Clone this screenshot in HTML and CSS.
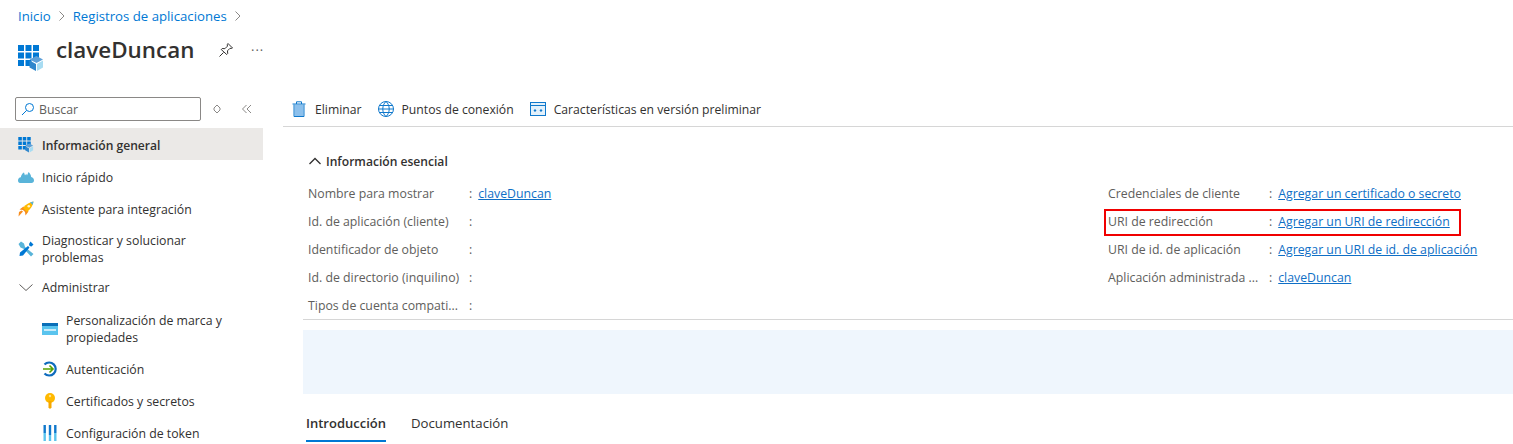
FILE: index.html
```html
<!DOCTYPE html>
<html lang="es">

<head>
  <meta charset="UTF-8">
  <meta name="viewport" content="width=device-width, initial-scale=1.0">
  <title>claveDuncan</title>
  <link rel="stylesheet" href="styles.css">
</head>

<body>
  <nav class="breadcrumb">
    <a href="#">Inicio</a>
    <svg class="crumb-sep" width="8" height="12" viewBox="0 0 8 12"><path d="M1.500 1.500 6 6l-4.500 4.500" /></svg>
    <a href="#">Registros de aplicaciones</a>
    <svg class="crumb-sep" width="8" height="12" viewBox="0 0 8 12"><path d="M1.500 1.500 6 6l-4.500 4.500" /></svg>
  </nav>

  <header class="title-row">
    <svg class="app-icon" width="26" height="27" viewBox="0 0 26 27">
      <path fill="#0078d4" d="M0 0h6v6H0zM7.500 0h6v6h-6zM15 0h6v6h-6zM0 7.500h6v6H0zM7.500 7.500h6v6h-6zM15 7.500h6v6h-6zM0 15h6v6H0zM7.500 15h6v6h-6z" />
      <path fill="#5ea0d8" d="M18.500 11 25 14.500 18.500 18 11.500 14.500z" />
      <path fill="#2f86cc" d="M11.500 15.500 18 19v7l-6.500-3.500z" />
      <path fill="#a8dcf2" d="M25 15.500V22.500L19 26v-7z" />
    </svg>
    <h1>claveDuncan</h1>
    <svg class="pin" width="16" height="16" viewBox="0 0 16 16">
      <path d="M10 1.500 14.500 6l-1 .5-1.500-.2-2.500 2.500.2 2.700-1 1L3.200 7.500l1-1 2.700.2L9.400 4.200 9.300 2.600zM5.500 10.500 1.500 14.500" />
    </svg>
    <span class="more">···</span>
  </header>

  <div class="layout">
    <aside class="sidebar">
      <div class="search-row">
        <label class="search">
          <svg width="14" height="14" viewBox="0 0 14 14"><circle cx="8.500" cy="5.500" r="4" /><path d="M5.500 8.500 1 13" /></svg>
          <span>Buscar</span>
        </label>
        <svg class="search-tool" width="10" height="10" viewBox="0 0 10 10"><path d="M5 1 8 4v2L5 9 2 6V4z" /></svg>
        <svg class="search-tool collapse" width="10" height="10" viewBox="0 0 10 10"><path d="M4.500 1 .5 5l4 4M9 1 5 5l4 4" /></svg>
      </div>

      <ul class="nav">
        <li class="nav-item active">
          <svg width="16" height="16" viewBox="0 0 26 27">
            <path fill="#0078d4" d="M0 0h6v6H0zM7.500 0h6v6h-6zM15 0h6v6h-6zM0 7.500h6v6H0zM7.500 7.500h6v6h-6zM15 7.500h6v6h-6zM0 15h6v6H0zM7.500 15h6v6h-6z" />
            <path fill="#5ea0d8" d="M18.500 11 25 14.500 18.500 18 11.500 14.500z" />
            <path fill="#2f86cc" d="M11.500 15.500 18 19v7l-6.500-3.500z" />
            <path fill="#a8dcf2" d="M25 15.500V22.500L19 26v-7z" />
          </svg>
          <span>Información general</span>
        </li>
        <li class="nav-item">
          <svg width="16" height="16" viewBox="0 0 16 16">
            <path fill="#59b4d9" d="M0 11.500C0 9.500 1.200 8.300 2.800 8.200 3.300 5.800 4.600 4 6 3.500L7 6.500 8.200 4.800 9 6.500 10.500 3C12 4 13 6 13.200 8 15 8.300 16 9.700 16 11.500 16 13 15 14 13.500 14H2C.8 14 0 13 0 11.500z" />
          </svg>
          <span>Inicio rápido</span>
        </li>
        <li class="nav-item">
          <svg width="16" height="16" viewBox="0 0 16 16">
            <path fill="#f78d1e" d="M1.500 8.500 5.500 5.500 10.500 10.500 7.500 14.500 7 11 5 9z" />
            <path fill="#f78d1e" d="M5 10.500 .5 15.500 1 11 3.500 9.500z" />
            <path fill="#ffb900" d="M5 7C8 3 12 1 15.500.5 15 4 13 8 9 11z" />
            <path fill="#59b4d9" d="M12 1.200 15.500.5 14.800 4z" />
            <circle cx="10.800" cy="5.200" r="1.300" fill="#fff4cc" />
          </svg>
          <span>Asistente para integración</span>
        </li>
        <li class="nav-item tall">
          <svg width="16" height="16" viewBox="0 0 16 16">
            <path fill="#59b4d9" d="M.5 3 3 .5 6 2.500 7 6 15.500 13 13 15.500 6 8 2.500 6.500z" />
            <path fill="#0078d4" d="M12.500.5 15.500 3.500 13.500 5.500 11.500 5 11 3zM10 5l1.500 1.500L5 14.500 1.500 15 2 11.500z" />
          </svg>
          <span>Diagnosticar y solucionar problemas</span>
        </li>
        <li class="nav-item">
          <svg class="chevron" width="16" height="16" viewBox="0 0 16 16"><path d="M1.500 5.500 8 11.500 14.500 5.500" /></svg>
          <span>Administrar</span>
        </li>
        <li class="nav-item sub tall">
          <svg width="16" height="16" viewBox="0 0 16 16">
            <path fill="#5ac4ee" d="M0 2h16v12H0z" />
            <path fill="#0a6fb8" d="M0 2h16v3H0z" />
            <path fill="#c9ecfa" d="M2 8h12v2H2z" />
          </svg>
          <span>Personalización de marca y propiedades</span>
        </li>
        <li class="nav-item sub">
          <svg width="16" height="16" viewBox="0 0 16 16">
            <path fill="none" stroke="#0f6cbd" stroke-width="2.200" d="M2.500 3.500A6.500 6.500 0 1 1 2.500 12.500" />
            <path fill="none" stroke="#57a300" stroke-width="1.600" d="M1 8h10M7.500 4.500 11 8l-3.500 3.500" />
          </svg>
          <span>Autenticación</span>
        </li>
        <li class="nav-item sub">
          <svg width="16" height="16" viewBox="0 0 16 16">
            <circle cx="8" cy="5" r="5" fill="#ffb900" />
            <path fill="#f5a800" d="M6.500 8h3v6.500L8 16l-1.500-1.500z" />
            <circle cx="8" cy="3" r="1.200" fill="#ffe08a" />
          </svg>
          <span>Certificados y secretos</span>
        </li>
        <li class="nav-item sub">
          <svg width="16" height="16" viewBox="0 0 16 16">
            <path fill="#0f78cc" d="M1.500 0h2.400v8H1.500zM6.800 0h2.400v10H6.800zM12.100 0h2.400v8h-2.400z" />
            <path fill="#5ac4ee" d="M1.500 8h2.400v8H1.500zM6.800 10h2.400v6H6.800zM12.100 8h2.400v8h-2.400z" />
          </svg>
          <span>Configuración de token</span>
        </li>
      </ul>
    </aside>

    <main class="content">
      <div class="toolbar">
        <button class="tool">
          <svg width="16" height="16" viewBox="0 0 16 16">
            <path fill="#8cc0ec" d="M3.500 3.500h9V15h-9z" />
            <path fill="none" stroke="#0f78cc" d="M3 3.500v12h10v-12M1.500 3h13M5.500 3V.8h5V3" />
          </svg>
          Eliminar
        </button>
        <button class="tool">
          <svg width="16" height="16" viewBox="0 0 16 16">
            <path fill="none" stroke="#0f78cc" d="M8 .5a7.500 7.500 0 1 0 0 15 7.500 7.500 0 0 0 0-15zM8 .5C5.800 2.500 4.800 5 4.800 8s1 5.500 3.200 7.500M8 .5c2.200 2 3.200 4.500 3.200 7.500s-1 5.500-3.200 7.500M.5 8h15M1.500 4.500h13M1.500 11.500h13" />
          </svg>
          Puntos de conexión
        </button>
        <button class="tool">
          <svg width="16" height="16" viewBox="0 0 16 16">
            <path fill="#e3f1fb" d="M.5 1.500h15v13H.5z" />
            <path fill="#0f78cc" d="M0 1h16v14H0zM1 5v9h14V5zM1 2v2h14V2z" fill-rule="evenodd" />
            <path fill="#0f78cc" d="M5 8 6.500 9.500 5 11 3.500 9.500zM11 8 12.500 9.500 11 11 9.500 9.500z" />
          </svg>
          Características en versión preliminar
        </button>
      </div>

      <section class="essentials">
        <h2 class="essentials-title">
          <svg width="12" height="8" viewBox="0 0 12 8"><path d="M.5 7 6 1.500 11.500 7" /></svg>
          Información esencial
        </h2>
        <div class="props">
          <dl class="prop-col">
            <div class="prop"><dt>Nombre para mostrar</dt><dd><a href="#">claveDuncan</a></dd></div>
            <div class="prop"><dt>Id. de aplicación (cliente)</dt><dd></dd></div>
            <div class="prop"><dt>Identificador de objeto</dt><dd></dd></div>
            <div class="prop"><dt>Id. de directorio (inquilino)</dt><dd></dd></div>
            <div class="prop"><dt>Tipos de cuenta compati...</dt><dd></dd></div>
          </dl>
          <dl class="prop-col right">
            <div class="prop"><dt>Credenciales de cliente</dt><dd><a href="#">Agregar un certificado o secreto</a></dd></div>
            <div class="prop marked"><dt>URI de redirección</dt><dd><a href="#">Agregar un URI de redirección</a></dd></div>
            <div class="prop"><dt>URI de id. de aplicación</dt><dd><a href="#">Agregar un URI de id. de aplicación</a></dd></div>
            <div class="prop"><dt>Aplicación administrada ...</dt><dd><a href="#">claveDuncan</a></dd></div>
          </dl>
        </div>
      </section>

      <div class="notice"></div>

      <div class="tabs">
        <span class="tab selected">Introducción</span>
        <span class="tab">Documentación</span>
      </div>
    </main>
  </div>
</body>

</html>
```

FILE: styles.css
```css
body {
  font-family: "Open Sans", "Noto Sans", Arial, sans-serif;
  font-size: 12.3px;
  color: #323130;
  background-color: #fff;
  margin: 0;
  height: 444px;
  overflow: hidden;
}

a {
  color: #0f6fc6;
}

svg {
  flex-shrink: 0;
}

.breadcrumb {
  display: flex;
  align-items: center;
  gap: 7px;
  height: 32px;
  padding-left: 18px;
  font-size: 13.2px;
}

.breadcrumb a {
  color: #0078d4;
  text-decoration: none;
}

.crumb-sep path {
  fill: none;
  stroke: #8a8886;
}

.title-row {
  display: flex;
  align-items: flex-start;
  height: 60px;
  padding-left: 18px;
}

.app-icon {
  margin-top: 13px;
}

h1 {
  font-size: 22.4px;
  font-weight: 600;
  line-height: 32px;
  margin: 2px 0 0 12px;
  width: 162px;
}

.pin path {
  fill: none;
  stroke: #323130;
}

.pin {
  margin: 10px 0 0;
}

.more {
  margin: 9px 0 0 17px;
  font-size: 13px;
  letter-spacing: 1px;
  color: #605e5c;
}

.layout {
  display: flex;
}

.sidebar {
  width: 263px;
  flex-shrink: 0;
}

.search-row {
  display: flex;
  align-items: center;
  box-sizing: border-box;
  height: 36px;
  padding-left: 15px;
  padding-bottom: 2px;
}

.search {
  display: flex;
  align-items: center;
  gap: 4px;
  box-sizing: border-box;
  width: 186px;
  height: 24px;
  padding-left: 5px;
  border: 1px solid #8a8886;
  border-radius: 2px;
  color: #605e5c;
}

.search svg {
  fill: none;
  stroke: #0078d4;
}

.search-tool {
  margin-left: 11px;
  fill: none;
  stroke: #8a8886;
}

.search-tool.collapse {
  margin-left: 20px;
}

.nav {
  list-style: none;
  margin: 0;
  padding: 0;
}

.nav-item {
  display: flex;
  align-items: center;
  gap: 8px;
  box-sizing: border-box;
  min-height: 32px;
  padding-top: 2px;
  padding-left: 18px;
  line-height: 17px;
}

.nav-item.active {
  background-color: #ebe9e7;
  font-weight: 600;
  font-size: 12.1px;
}

.nav-item.tall {
  padding-top: 8px;
  padding-bottom: 4px;
  padding-right: 30px;
}

.nav-item.sub {
  padding-left: 42px;
}

.nav-item.sub.tall {
  padding-top: 10px;
  padding-bottom: 6px;
}

.chevron path {
  fill: none;
  stroke: #605e5c;
}

.content {
  flex: 1;
  min-width: 0;
  margin-left: 20px;
}

.toolbar {
  display: flex;
  align-items: center;
  gap: 16px;
  height: 34px;
  padding-left: 8px;
  border-bottom: 1px solid #d6d6d6;
  font-size: 12.2px;
}

.tool {
  display: flex;
  align-items: center;
  gap: 8px;
  padding: 0;
  border: none;
  background: none;
  font: inherit;
  color: inherit;
}

.essentials {
  margin-left: 20px;
  border-bottom: 1px solid #d6d6d6;
}

.essentials-title {
  display: flex;
  align-items: center;
  gap: 5px;
  font-size: 12.1px;
  font-weight: 600;
  height: 22px;
  margin: 23px 0 7px 6px;
}

.essentials-title svg {
  fill: none;
  stroke: #323130;
  stroke-width: 1.3;
}

.props {
  display: flex;
  padding-left: 5px;
}

.prop-col {
  flex: 0 0 800px;
  margin: 0;
}

.prop-col.right {
  flex: 1;
  min-width: 0;
}

.prop {
  position: relative;
  display: flex;
  align-items: center;
  height: 28px;
}

.prop dt {
  width: 152px;
  white-space: nowrap;
  color: #605e5c;
  margin-right: 9px;
}

.prop dd {
  margin: 0;
  color: #605e5c;
}

.prop dd::before {
  content: ":";
  margin-right: 6px;
}

/* red annotation drawn on the screenshot */
.marked::after {
  content: "";
  position: absolute;
  left: -4px;
  top: 2px;
  width: 353px;
  height: 23px;
  border: 2px solid #f00000;
}

.notice {
  height: 64px;
  margin: 10px 0 0 20px;
  background-color: #eff6fd;
}

.tabs {
  display: flex;
  gap: 25px;
  margin: 16px 0 0 23px;
  font-size: 13.2px;
}

.tab {
  height: 26px;
  padding-top: 4px;
}

.tab.selected {
  font-weight: 600;
  font-size: 13px;
  border-bottom: 2px solid #0078d4;
}
```
